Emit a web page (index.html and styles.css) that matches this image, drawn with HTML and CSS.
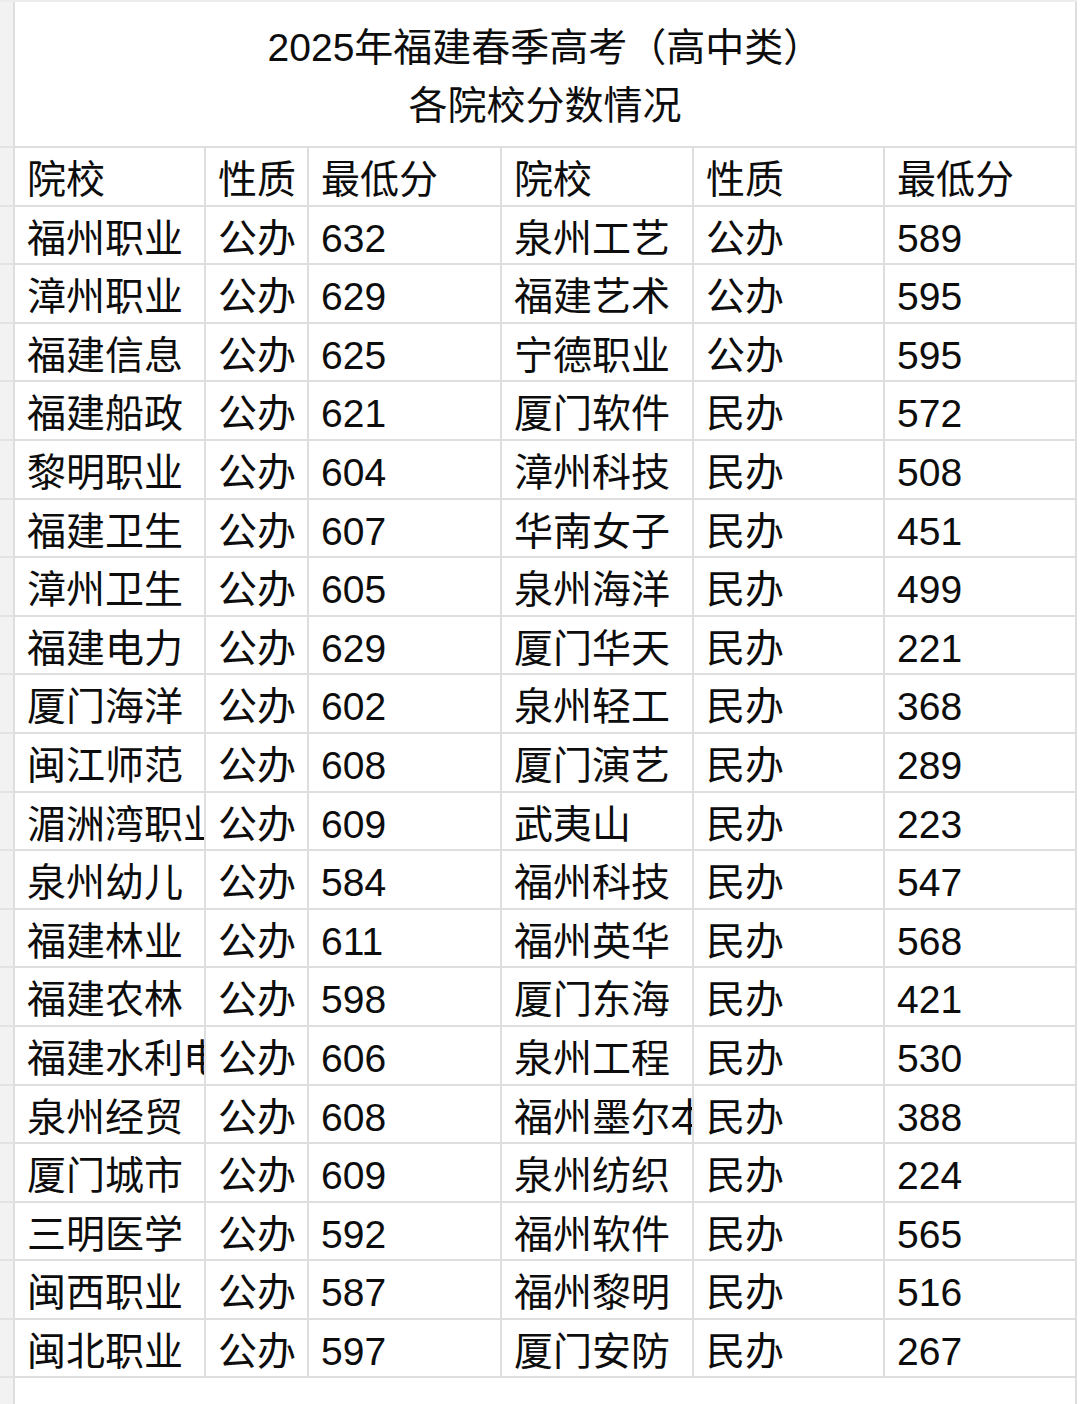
FILE: index.html
```html
<!DOCTYPE html>
<html lang="zh-CN">
<head>
<meta charset="utf-8">
<link rel="stylesheet" href="styles.css">
</head>
<body>
<div class="sheet">
  <div class="g"></div>
  <div class="title"><div>2025年福建春季高考（高中类）</div><div>各院校分数情况</div></div>

  <div class="g"></div><div class="c">院校</div><div class="c">性质</div><div class="c">最低分</div><div class="c">院校</div><div class="c">性质</div><div class="c">最低分</div>
  <div class="g"></div><div class="c">福州职业</div><div class="c">公办</div><div class="c">632</div><div class="c">泉州工艺</div><div class="c">公办</div><div class="c">589</div>
  <div class="g"></div><div class="c">漳州职业</div><div class="c">公办</div><div class="c">629</div><div class="c">福建艺术</div><div class="c">公办</div><div class="c">595</div>
  <div class="g"></div><div class="c">福建信息</div><div class="c">公办</div><div class="c">625</div><div class="c">宁德职业</div><div class="c">公办</div><div class="c">595</div>
  <div class="g"></div><div class="c">福建船政</div><div class="c">公办</div><div class="c">621</div><div class="c">厦门软件</div><div class="c">民办</div><div class="c">572</div>
  <div class="g"></div><div class="c">黎明职业</div><div class="c">公办</div><div class="c">604</div><div class="c">漳州科技</div><div class="c">民办</div><div class="c">508</div>
  <div class="g"></div><div class="c">福建卫生</div><div class="c">公办</div><div class="c">607</div><div class="c">华南女子</div><div class="c">民办</div><div class="c">451</div>
  <div class="g"></div><div class="c">漳州卫生</div><div class="c">公办</div><div class="c">605</div><div class="c">泉州海洋</div><div class="c">民办</div><div class="c">499</div>
  <div class="g"></div><div class="c">福建电力</div><div class="c">公办</div><div class="c">629</div><div class="c">厦门华天</div><div class="c">民办</div><div class="c">221</div>
  <div class="g"></div><div class="c">厦门海洋</div><div class="c">公办</div><div class="c">602</div><div class="c">泉州轻工</div><div class="c">民办</div><div class="c">368</div>
  <div class="g"></div><div class="c">闽江师范</div><div class="c">公办</div><div class="c">608</div><div class="c">厦门演艺</div><div class="c">民办</div><div class="c">289</div>
  <div class="g"></div><div class="c">湄洲湾职业</div><div class="c">公办</div><div class="c">609</div><div class="c">武夷山</div><div class="c">民办</div><div class="c">223</div>
  <div class="g"></div><div class="c">泉州幼儿</div><div class="c">公办</div><div class="c">584</div><div class="c">福州科技</div><div class="c">民办</div><div class="c">547</div>
  <div class="g"></div><div class="c">福建林业</div><div class="c">公办</div><div class="c">611</div><div class="c">福州英华</div><div class="c">民办</div><div class="c">568</div>
  <div class="g"></div><div class="c">福建农林</div><div class="c">公办</div><div class="c">598</div><div class="c">厦门东海</div><div class="c">民办</div><div class="c">421</div>
  <div class="g"></div><div class="c">福建水利电</div><div class="c">公办</div><div class="c">606</div><div class="c">泉州工程</div><div class="c">民办</div><div class="c">530</div>
  <div class="g"></div><div class="c">泉州经贸</div><div class="c">公办</div><div class="c">608</div><div class="c">福州墨尔本</div><div class="c">民办</div><div class="c">388</div>
  <div class="g"></div><div class="c">厦门城市</div><div class="c">公办</div><div class="c">609</div><div class="c">泉州纺织</div><div class="c">民办</div><div class="c">224</div>
  <div class="g"></div><div class="c">三明医学</div><div class="c">公办</div><div class="c">592</div><div class="c">福州软件</div><div class="c">民办</div><div class="c">565</div>
  <div class="g"></div><div class="c">闽西职业</div><div class="c">公办</div><div class="c">587</div><div class="c">福州黎明</div><div class="c">民办</div><div class="c">516</div>
  <div class="g"></div><div class="c">闽北职业</div><div class="c">公办</div><div class="c">597</div><div class="c">厦门安防</div><div class="c">民办</div><div class="c">267</div>

  <div class="g last"></div><div class="blank"></div>
</div>
</body>
</html>
```
FILE: styles.css
```css
html, body {
  margin: 0;
  padding: 0;
  background: #ffffff;
}
body {
  width: 1080px;
  height: 1404px;
  overflow: hidden;
  font-family: "Liberation Sans", "Noto Sans CJK SC", sans-serif;
  color: #0d0d0d;
}
.sheet {
  display: grid;
  grid-template-columns: 15px 191px 103px 193px 192px 191px 192px;
  grid-template-rows: 146px repeat(21, 58.6px) 40px;
  border-top: 2px solid #ececec;
  width: 1077px;
}
.g {
  background: #f2f2f2;
  border-right: 2px solid #dedede;
  border-bottom: 2px solid #e2e2e2;
  box-sizing: border-box;
}
.title {
  grid-column: 2 / 8;
  border-right: 2px solid #dedede;
  border-bottom: 2px solid #dedede;
  box-sizing: border-box;
  display: flex;
  flex-direction: column;
  align-items: center;
  justify-content: center;
  font-size: 39px;
  line-height: 58px;
  padding-top: 6px;
}
.c {
  border-right: 2px solid #dedede;
  border-bottom: 2px solid #dedede;
  box-sizing: border-box;
  font-size: 39px;
  line-height: 56px;
  padding: 4px 0 0 12px;
  white-space: nowrap;
  overflow: hidden;
}
.blank {
  grid-column: 2 / 8;
  border-right: 2px solid #dedede;
}
.last {
  border-bottom: none;
}
```
